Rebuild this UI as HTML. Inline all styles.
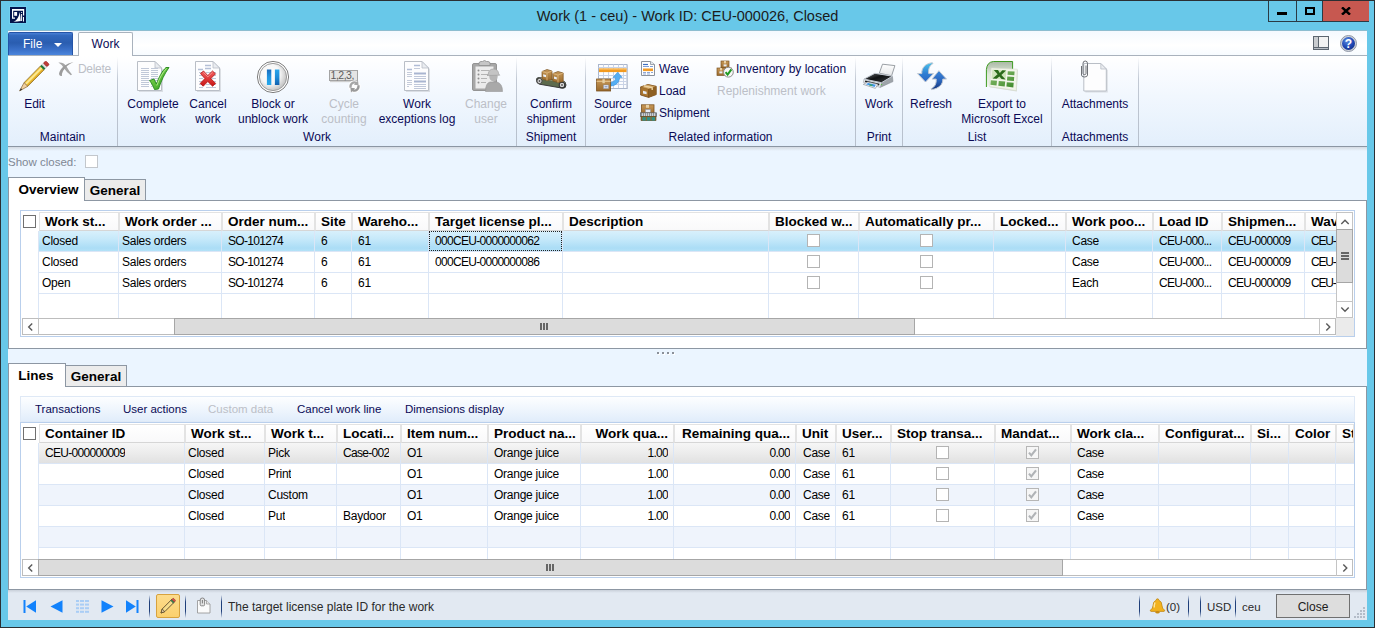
<!DOCTYPE html>
<html><head><meta charset="utf-8"><title>Work</title>
<style>
html,body{margin:0;padding:0;}
body{width:1375px;height:628px;overflow:hidden;background:#68c8e9;font-family:"Liberation Sans",sans-serif;font-size:12px;color:#0a0a56;}
#win{position:absolute;left:0;top:0;width:1375px;height:628px;background:#68c8e9;box-sizing:border-box;border:1px solid #2b2f33;overflow:hidden;}
#win *{box-sizing:border-box;}
.a{position:absolute;}
/* all coordinates inside #win are relative to its padding box => offset by -1 ; we use #o wrapper */
#o{position:absolute;left:-1px;top:-1px;width:1375px;height:628px;}
#title{left:0;width:1375px;top:6px;height:20px;line-height:20px;text-align:center;font-size:14.5px;color:#1b1b1b;}
#content{left:8px;top:30px;width:1359px;height:590px;background:#ebf5ff;}
.capbtn{top:1px;height:21px;border-left:1px solid #2a3a44;border-bottom:1px solid #2a3a44;}
#tabrow{left:8px;top:31px;width:1359px;height:25px;background:linear-gradient(#f4f9ff,#ffffff 60%,#f7fbff);border-bottom:1px solid #a9b2bd;}
#filebtn{left:8px;top:32px;width:65px;height:23px;border-radius:2px 2px 0 0;background:linear-gradient(#4a80d6,#3168bd 12%,#2a5db0 45%,#3a70c8 75%,#4c86dc);border:1px solid #2454a8;border-bottom:none;color:#fff;font-size:12px;line-height:21px;}
#worktab{left:78px;top:32px;width:55px;height:24px;border:1px solid #a9b2bd;border-bottom:none;border-radius:2px 2px 0 0;background:#fff;font-size:12px;line-height:22px;text-align:center;color:#0a0a56;}
#ribbon{left:8px;top:56px;width:1359px;height:91px;background:linear-gradient(#ffffff,#fafcff 15%,#f1f7fe 45%,#e3effc 100%);border-bottom:1px solid #8b96a3;}
.gsep{top:57px;width:1px;height:89px;background:linear-gradient(rgba(190,198,210,0),#c2c9d4 25%,#b6bfcc);}
.glabel{top:130px;height:15px;line-height:15px;text-align:center;white-space:nowrap;}
.lb{top:97px;line-height:15px;text-align:center;white-space:nowrap;}
.dis{color:#bcbfc7;}
.st{height:15px;line-height:15px;white-space:nowrap;}
.panel{background:#fff;border:1px solid #8d97a3;}
.tabA{letter-spacing:0;background:#fff;border:1px solid #8d97a3;border-bottom:none;font-weight:bold;font-size:13.5px;color:#000;text-align:center;}
.tabB{letter-spacing:0;background:#ececec;border:1px solid #8d97a3;font-weight:bold;font-size:13.5px;color:#000;text-align:center;}
.hdr{top:0;height:19px;border:1px solid #e3e3e3;border-bottom-color:#d6d6d6;background:linear-gradient(#ffffff,#f9f9fa);font-weight:bold;font-size:13.5px;line-height:17px;color:#000;padding-left:5px;white-space:nowrap;overflow:hidden;}
.cell{height:21px;line-height:20px;white-space:nowrap;overflow:hidden;color:#000;font-size:12px;letter-spacing:-0.25px;}
.vl{width:1px;background:#dbe6f6;}
.hl{height:1px;background:#dbe6f6;}
.cb{width:13px;height:13px;border:1px solid #a8a8a8;background:#fff;}
.sbar{background:#fff;border:1px solid #a6a6a6;}

.num{letter-spacing:-0.7px;}

</style></head>
<body>
<div id="win">
<!-- p_chrome -->
<div id="o">
<svg class="a" style="left:9px;top:6px" width="18" height="18" viewBox="-1 -1 18 18"><rect x="-1" y="-1" width="18" height="18" fill="#7ad6f2" opacity="0.55"/><rect width="16" height="16" fill="#03144c"/><path d="M2 2 H14.2 V8.6 H13 V3.7 H3.2 V10.6 H5 V11.8 H2 Z" fill="#fff"/><rect x="4.2" y="5" width="2.9" height="3.8" fill="#fff"/><path d="M3.3 14.7 C7 13.5 8.8 10 9.8 5 C10.3 8.5 10.6 11.5 10.8 14 C8.5 14.2 6 14.6 3.3 14.7Z" fill="#fff"/><rect x="11.1" y="7" width="1" height="7" fill="#fff"/><circle cx="11.6" cy="5.5" r="0.6" fill="#fff"/><rect x="13" y="10" width="1" height="4.5" fill="#fff"/></svg>
<div id="title" class="a">Work (1 - ceu) - Work ID: CEU-000026, Closed</div>
<div class="a capbtn" style="left:1268px;width:28px;"></div>
<div class="a" style="left:1277px;top:12px;width:10px;height:3px;background:#000"></div>
<div class="a capbtn" style="left:1296px;width:26px;"></div>
<div class="a" style="left:1305px;top:7px;width:10px;height:8px;border:2px solid #000;"></div>
<div class="a capbtn" style="left:1322px;width:47px;background:#c75850;border-left:1px solid #2a3a44;"></div>
<svg class="a" style="left:1341px;top:7px" width="10" height="8" viewBox="0 0 10 8"><path d="M1 0.4L9 7.6M9 0.4L1 7.6" stroke="#000" stroke-width="2.5" fill="none"/></svg>
<div id="content" class="a"></div>
<div class="a" style="left:8px;top:30px;width:1359px;height:1px;background:#8dbdd0"></div>
<div id="tabrow" class="a"></div>
<div id="filebtn" class="a"><span class="a" style="left:14px;top:1px">File</span><span class="a" style="left:45px;top:10px;width:0;height:0;border-left:4px solid transparent;border-right:4px solid transparent;border-top:4px solid #fff"></span></div>
<div id="worktab" class="a">Work</div>
<svg class="a" style="left:1313px;top:36px" width="16" height="14" viewBox="0 0 16 14"><rect x="0.5" y="0.5" width="15" height="13" fill="#f2f2f2" stroke="#5d6670"/><rect x="1" y="1" width="4" height="10" fill="#c9ccd0"/><rect x="1" y="11" width="14" height="2" fill="#b8bdc4"/><path d="M5.5 1V11M1 11.5H15" stroke="#5d6670" stroke-width="1" fill="none"/></svg>
<svg class="a" style="left:1340px;top:35px" width="17" height="17" viewBox="0 0 17 17"><defs><radialGradient id="hg" cx="0.4" cy="0.3" r="0.8"><stop offset="0" stop-color="#5b8de0"/><stop offset="0.6" stop-color="#1f46b4"/><stop offset="1" stop-color="#14307e"/></radialGradient></defs><circle cx="8.5" cy="8.5" r="8" fill="#d0d4dc" stroke="#8f97a6"/><circle cx="8.5" cy="8.5" r="6.5" fill="url(#hg)"/><text x="8.5" y="13" text-anchor="middle" font-family="Liberation Sans" font-weight="bold" font-size="12" fill="#fff">?</text></svg>
<div id="ribbon" class="a"></div>
<!-- p_ribbon -->
<svg width="0" height="0" style="position:absolute"><defs><linearGradient id="gGreen" x1="0" y1="0" x2="1" y2="1"><stop offset="0" stop-color="#8fe05a"/><stop offset="1" stop-color="#2c9a1c"/></linearGradient><linearGradient id="gRed" x1="0" y1="0" x2="0" y2="1"><stop offset="0" stop-color="#f46060"/><stop offset="1" stop-color="#c81414"/></linearGradient><linearGradient id="gBox" x1="0" y1="0" x2="0" y2="1"><stop offset="0" stop-color="#c99a5a"/><stop offset="1" stop-color="#9a6a2c"/></linearGradient><linearGradient id="gBlueA" x1="0" y1="0" x2="0" y2="1"><stop offset="0" stop-color="#6db3ee"/><stop offset="1" stop-color="#2a62b8"/></linearGradient><linearGradient id="gPause" x1="0" y1="0" x2="1" y2="0"><stop offset="0" stop-color="#1a86d8"/><stop offset="0.5" stop-color="#3fa6ec"/><stop offset="1" stop-color="#1668b4"/></linearGradient><radialGradient id="gDisc" cx="0.5" cy="0.5" r="0.5"><stop offset="0" stop-color="#ffffff"/><stop offset="0.7" stop-color="#f4f4f4"/><stop offset="1" stop-color="#c9c9c9"/></radialGradient><linearGradient id="gXl" x1="0" y1="0" x2="0" y2="1"><stop offset="0" stop-color="#dfeede"/><stop offset="1" stop-color="#9cc58e"/></linearGradient></defs></svg>
<div class="a gsep" style="left:117px"></div>
<div class="a gsep" style="left:516px"></div>
<div class="a gsep" style="left:585px"></div>
<div class="a gsep" style="left:855px"></div>
<div class="a gsep" style="left:902px"></div>
<div class="a gsep" style="left:1051px"></div>
<div class="a gsep" style="left:1138px"></div>
<div class="a glabel" style="left:-37.5px;width:200px">Maintain</div>
<div class="a glabel" style="left:217px;width:200px">Work</div>
<div class="a glabel" style="left:451px;width:200px">Shipment</div>
<div class="a glabel" style="left:620.5px;width:200px">Related information</div>
<div class="a glabel" style="left:779px;width:200px">Print</div>
<div class="a glabel" style="left:877px;width:200px">List</div>
<div class="a glabel" style="left:995px;width:200px">Attachments</div>
<div class="a lb" style="left:-45.5px;width:160px">Edit</div>
<div class="a lb" style="left:73px;width:160px">Complete<br>work</div>
<div class="a lb" style="left:128px;width:160px">Cancel<br>work</div>
<div class="a lb" style="left:193px;width:160px">Block or<br>unblock work</div>
<div class="a lb dis" style="left:264px;width:160px">Cycle<br>counting</div>
<div class="a lb" style="left:337px;width:160px">Work<br>exceptions log</div>
<div class="a lb dis" style="left:406px;width:160px">Change<br>user</div>
<div class="a lb" style="left:471px;width:160px">Confirm<br>shipment</div>
<div class="a lb" style="left:533px;width:160px">Source<br>order</div>
<div class="a lb" style="left:799px;width:160px">Work</div>
<div class="a lb" style="left:851px;width:160px">Refresh</div>
<div class="a lb" style="left:922px;width:160px">Export to<br>Microsoft Excel</div>
<div class="a lb" style="left:1015px;width:160px">Attachments</div>
<div class="a st dis" style="left:78px;top:62px;letter-spacing:-0.3px">Delete</div>
<div class="a st" style="left:659px;top:62px">Wave</div>
<div class="a st" style="left:659px;top:84px">Load</div>
<div class="a st" style="left:659px;top:106px">Shipment</div>
<div class="a st" style="left:736px;top:62px">Inventory by location</div>
<div class="a st dis" style="left:717px;top:84px">Replenishment work</div>
<svg class="a" style="left:19px;top:61px" width="31" height="31" viewBox="0 0 31 31"><g transform="translate(0.6,29.9) rotate(-45.4)"><rect x="9" y="-2.6" width="23.4" height="5.2" fill="#f3c93f" stroke="#8c6d2c" stroke-width="0.8"/><rect x="9" y="-1.3" width="23" height="1.7" fill="#fbe896"/><rect x="9" y="1.2" width="23" height="1" fill="#dba524"/><path d="M0 0 L9 -2.6 L9 2.6 Z" fill="#f0cfa0" stroke="#8a6a3a" stroke-width="0.7"/><path d="M0 0 L2.8 -0.9 L2.8 0.9 Z" fill="#2e2e2e"/><rect x="32" y="-2.6" width="2.2" height="5.2" fill="#1c7a3a"/><rect x="34.2" y="-2.6" width="2.2" height="5.2" fill="#e2e2e2" stroke="#9a9a9a" stroke-width="0.4"/><rect x="36.4" y="-2.6" width="3.4" height="5.2" rx="1.2" fill="#c03c39" stroke="#8e2c29" stroke-width="0.5"/></g></svg>
<svg class="a" style="left:58px;top:61px" width="17" height="16" viewBox="0 0 17 16"><path d="M0.4 1.6 Q6 1.2 8.7 5.8 Q11.2 10.5 14 13.6 L12.8 14.3 Q8.6 11.4 6.2 7.6 Q4 3.6 0.4 1.6Z" fill="#a6a6a6"/><path d="M15.6 0.9 Q8.4 4 5 10 Q3.6 12.8 4 14.8 Q1.6 15.6 1 13 Q1.4 9 6 5 Q10 1.6 15.6 0.9Z" fill="#9c9c9c"/></svg>
<svg class="a" style="left:137px;top:61px" width="33" height="31" viewBox="0 0 33 31"><path d="M2 2H19 L26 8 V31 H2Z" fill="#c4c8ce" opacity="0.55"/><path d="M0.5 0.5H18 L24.5 7 V29.5 H0.5Z" fill="#fdfdfe" stroke="#b9bec6"/><path d="M18 0.5V7H24.5 Z" fill="#e9ecf0" stroke="#b9bec6" stroke-width="0.8"/><path d="M4 7.5 H12 M14 7.5 H21" stroke="#c0c8d8" stroke-width="1"/><path d="M4 9.5 H12 M14 9.5 H21" stroke="#c0c8d8" stroke-width="1"/><path d="M4 11.5 H12 M14 11.5 H21" stroke="#c0c8d8" stroke-width="1"/><path d="M4 13.5 H12 M14 13.5 H21" stroke="#c0c8d8" stroke-width="1"/><path d="M4 15.5 H12 M14 15.5 H21" stroke="#c0c8d8" stroke-width="1"/><path d="M4 17.5 H12 M14 17.5 H21" stroke="#c0c8d8" stroke-width="1"/><path d="M4 19.5 H12 M14 19.5 H21" stroke="#c0c8d8" stroke-width="1"/><path d="M4 21.5 H12 M14 21.5 H21" stroke="#c0c8d8" stroke-width="1"/><path d="M4 23.5 H12 M14 23.5 H21" stroke="#c0c8d8" stroke-width="1"/><path d="M4 25.5 H12 M14 25.5 H21" stroke="#c0c8d8" stroke-width="1"/><path d="M12.5 19.5 L17 18 L19.5 23 C22 16 25 10 29 6.5 L32 6.5 C28 12 24 20 21.5 28 L17.5 28.5 C16 24.5 14.5 22 12.5 19.5 Z" fill="url(#gGreen)" stroke="#23861a" stroke-width="0.9"/><path d="M19.8 24.5 C22.5 17 25.5 11.5 29.5 7.5" stroke="#c8f5a0" stroke-width="1" fill="none" opacity="0.8"/></svg>
<svg class="a" style="left:195px;top:61px" width="27" height="31" viewBox="0 0 27 31"><path d="M2 2H19 L26 8 V31 H2Z" fill="#c4c8ce" opacity="0.55"/><path d="M0.5 0.5H18 L24.5 7 V29.5 H0.5Z" fill="#fdfdfe" stroke="#b9bec6"/><path d="M18 0.5V7H24.5 Z" fill="#e9ecf0" stroke="#b9bec6" stroke-width="0.8"/><path d="M10 4.5H16M10 7.5H16M3 8.5H8" stroke="#b4bfd6" stroke-width="1.4"/><path d="M4 11.5 H8 M11 11.5 H21" stroke="#c0c8d8" stroke-width="1"/><path d="M4 14.5 H8 M11 14.5 H21" stroke="#c0c8d8" stroke-width="1"/><path d="M4 17.5 H8 M11 17.5 H21" stroke="#c0c8d8" stroke-width="1"/><path d="M4 20.5 H8 M11 20.5 H21" stroke="#c0c8d8" stroke-width="1"/><path d="M4 23.5 H8 M11 23.5 H21" stroke="#c0c8d8" stroke-width="1"/><path d="M4 26.5 H8 M11 26.5 H21" stroke="#c0c8d8" stroke-width="1"/><path d="M5.5 12.5 L8.5 10 L12.8 14.6 L17.5 10 L20.5 12.8 L15.8 17.6 L20.6 22.4 L17.6 25.2 L12.8 20.5 L8.2 25.2 L5.2 22.4 L9.9 17.6 Z" fill="url(#gRed)" stroke="#b01010" stroke-width="0.8" stroke-linejoin="round"/><path d="M8.5 11.2 L12.8 15.8 L17.5 11.2" stroke="#ffb0b0" stroke-width="0.9" fill="none" opacity="0.8"/></svg>
<svg class="a" style="left:256px;top:60px" width="34" height="34" viewBox="0 0 34 34"><defs><linearGradient id="gP1" x1="0" y1="0" x2="0" y2="1"><stop offset="0" stop-color="#1c6cbc"/><stop offset="0.5" stop-color="#2196e2"/><stop offset="1" stop-color="#27a8ea"/></linearGradient><linearGradient id="gP2" x1="0" y1="0" x2="0" y2="1"><stop offset="0" stop-color="#2ba6ea"/><stop offset="0.5" stop-color="#1f8cd8"/><stop offset="1" stop-color="#1262b0"/></linearGradient><radialGradient id="gDisc2" cx="0.4" cy="0.4" r="0.65"><stop offset="0" stop-color="#ffffff"/><stop offset="0.55" stop-color="#f6f6f6"/><stop offset="1" stop-color="#bdbdbd"/></radialGradient></defs><circle cx="17" cy="17" r="15.6" fill="#ffffff" stroke="#7e7e7e" stroke-width="1"/><circle cx="17" cy="17" r="13.6" fill="url(#gDisc2)" stroke="#9c9c9c" stroke-width="1"/><rect x="10.9" y="9.5" width="4.4" height="15.5" fill="url(#gP1)"/><rect x="18.9" y="9.5" width="4.5" height="15.5" fill="url(#gP2)"/></svg>
<svg class="a" style="left:328px;top:69px" width="34" height="25" viewBox="0 0 34 25"><rect x="1.5" y="1.5" width="28" height="10" fill="#e4e4e4" stroke="#a4a4a4"/><rect x="2" y="12" width="28" height="1.2" fill="#cfcfcf"/><text x="2.6" y="10.4" font-family="Liberation Sans" font-size="10.5" fill="#5c5c5c" letter-spacing="-0.5">1,2,3,</text><circle cx="26.5" cy="17.5" r="6.2" fill="#fdfdfd"/><path d="M21.6 19 A5.2 5.2 0 0 1 28.8 12.8 L30 11.4 L30.6 16.2 L25.8 15.8 L27.2 14.6 A3 3 0 0 0 23.8 18.4 Z" fill="#a6a6a6"/><path d="M31.4 16 A5.2 5.2 0 0 1 24.2 22.2 L23 23.6 L22.4 18.8 L27.2 19.2 L25.8 20.4 A3 3 0 0 0 29.2 16.6 Z" fill="#9a9a9a"/></svg>
<svg class="a" style="left:404px;top:61px" width="27" height="31" viewBox="0 0 27 31"><path d="M2 2H19 L26 8 V31 H2Z" fill="#c4c8ce" opacity="0.55"/><path d="M0.5 0.5H18 L24.5 7 V29.5 H0.5Z" fill="#fdfdfe" stroke="#b9bec6"/><path d="M18 0.5V7H24.5 Z" fill="#e9ecf0" stroke="#b9bec6" stroke-width="0.8"/><path d="M10 4.5H16M3 8.5H8" stroke="#b0bcd6" stroke-width="1.6"/><path d="M10 7.5H16M3 11.5H8M3 13.5H8M3 15.5H8M3 19.5H8M3 21.5H8M3 23.5H8M3 25.5H5" stroke="#c4cbda" stroke-width="1"/><path d="M10 12.5H22M10 20.5H22" stroke="#a9b5d0" stroke-width="1.8"/><path d="M10 15.5H22M10 17.5H22M10 23.5H22M10 25.5H22M10 27.5H22" stroke="#c0c8da" stroke-width="1"/></svg>
<svg class="a" style="left:472px;top:60px" width="32" height="32" viewBox="0 0 32 32"><rect x="0.5" y="3.5" width="24" height="27" rx="1.5" fill="#a7a7a7" stroke="#949494"/><rect x="3.5" y="6.5" width="18" height="22" fill="#ececec"/><path d="M7 3.5 Q7 1.5 9 1.5 H10.5 Q12.5 -0.5 14.5 1.5 H16 Q18 1.5 18 3.5 V5.5 H7 Z" fill="#c6c6c6" stroke="#8f8f8f" stroke-width="0.8"/><path d="M9 10.5H17M9 14.5H17M9 18.5H15M9 22.5H14" stroke="#b4b4b4" stroke-width="1"/><circle cx="6.5" cy="10.5" r="1" fill="#8e8e8e"/><circle cx="6.5" cy="14.5" r="1" fill="#8e8e8e"/><circle cx="6.5" cy="18.5" r="1" fill="#8e8e8e"/><circle cx="6.5" cy="22.5" r="1" fill="#8e8e8e"/><path d="M13.5 31.5 Q13.5 23 18 22 L25 22 Q30.5 23.5 30.5 31.5 Z" fill="#a9a9a9" stroke="#979797" stroke-width="0.6"/><ellipse cx="21.5" cy="16.5" rx="4.2" ry="5" fill="#b6b6b6"/><path d="M16.2 14.5 Q16.5 9 21.5 9 Q26.3 9 26.7 14 L27.8 15.2 L15 15.5 Z" fill="#c4c4c4" stroke="#9b9b9b" stroke-width="0.6"/></svg>
<svg class="a" style="left:535px;top:68px" width="33" height="22" viewBox="0 0 33 22"><path d="M1.5 12.5 Q1 9.5 4 9.6 L27 12.6 Q31 13.4 31 17 Q31 20.5 27.5 20.2 L4.5 16.2 Q1.8 15.6 1.5 12.5Z" fill="#5d6b4d" stroke="#3d3d3d" stroke-width="1"/><path d="M4 10.4 L27 13.4 Q29.6 14 29.8 16" stroke="#9aa58a" stroke-width="1.2" fill="none"/><circle cx="4.5" cy="13" r="2.6" fill="#d8d8d8" stroke="#444" stroke-width="1"/><circle cx="4.5" cy="13" r="0.9" fill="#555"/><circle cx="27" cy="17" r="2.8" fill="#d8d8d8" stroke="#333" stroke-width="1.1"/><circle cx="27" cy="17" r="0.9" fill="#555"/><path d="M7 3.5 L12 1.5 L17 3 V11.5 L12 12.5 L7 11 Z" fill="url(#gBox)" stroke="#7a5220" stroke-width="0.7"/><path d="M7 3.5 L12 5 L17 3 M12 5 V12.5" stroke="#e2bd84" stroke-width="0.8" fill="none"/><rect x="8.2" y="6.5" width="2.8" height="2.2" fill="#e9eef5" transform="skewY(14) translate(0,-2.2)"/><path d="M17.8 5.5 L23 3.5 L28.2 5 V13.5 L23 14.5 L17.8 13 Z" fill="url(#gBox)" stroke="#7a5220" stroke-width="0.7"/><path d="M17.8 5.5 L23 7 L28.2 5 M23 7 V14.5" stroke="#e2bd84" stroke-width="0.8" fill="none"/><rect x="19" y="8.6" width="2.8" height="2.2" fill="#e9eef5" transform="skewY(14) translate(0,-4.8)"/></svg>
<svg class="a" style="left:596px;top:64px" width="33" height="28" viewBox="0 0 33 28"><g transform="translate(2,0)"><rect x="1" y="1" width="29" height="24" fill="#c7ccd3" opacity="0.7"/><rect x="0.5" y="0.5" width="28.5" height="24" fill="#fbfcfe" stroke="#aab6cc"/><path d="M5.5 0.5V24" stroke="#c9d3e6" stroke-width="1"/><path d="M10.5 0.5V24" stroke="#c9d3e6" stroke-width="1"/><path d="M15.5 0.5V24" stroke="#c9d3e6" stroke-width="1"/><path d="M20.5 0.5V24" stroke="#c9d3e6" stroke-width="1"/><path d="M25.5 0.5V24" stroke="#c9d3e6" stroke-width="1"/><path d="M0.5 3.5H29" stroke="#c9d3e6" stroke-width="1"/><path d="M0.5 11.5H29" stroke="#c9d3e6" stroke-width="1"/><path d="M0.5 14.5H29" stroke="#c9d3e6" stroke-width="1"/><path d="M0.5 17.5H29" stroke="#c9d3e6" stroke-width="1"/><path d="M0.5 20.5H29" stroke="#c9d3e6" stroke-width="1"/><rect x="1" y="4.5" width="27.5" height="3.6" fill="#f39a1f"/><rect x="1" y="4.5" width="27.5" height="1.2" fill="#f8bd62"/></g><path d="M15 18.4 C18.2 17.8 19.6 16 19.7 13.4 H17 L21.6 8.2 L26.2 13.4 H23.6 C23.4 18.2 20.2 21.4 15 22 Z" fill="#55aef2" stroke="#3a90dc" stroke-width="0.6"/><rect x="0.6" y="15" width="14" height="12" fill="url(#gBox)" stroke="#7a5220" stroke-width="0.8"/><path d="M0.6 17.4 H14.6" stroke="#e5c48e" stroke-width="1"/><rect x="6.4" y="15.2" width="2.4" height="4" fill="#e6cfa2"/><rect x="7.5" y="21" width="5" height="3.6" fill="#e8edf6" stroke="#8a93a6" stroke-width="0.5"/><path d="M8.5 22.8H11.5" stroke="#5a6a9a" stroke-width="0.8"/></svg>
<svg class="a" style="left:640px;top:61px" width="16" height="16" viewBox="0 0 16 16"><path d="M1.5 0.5H10.5L14.5 3.5V14.5H1.5Z" fill="#fff" stroke="#8b929c"/><path d="M10.5 0.5V3.5H14.5" fill="#e4e8ee" stroke="#8b929c" stroke-width="0.8"/><path d="M3 3.5H8" stroke="#3f6fc0" stroke-width="1.2"/><path d="M3 5.5H9M10 5.5H13" stroke="#7e9fd8" stroke-width="1"/><rect x="3" y="7.5" width="10" height="2.6" fill="#f29a25"/><path d="M3 11.5H6M7 11.5H10M11 11.5H13M3 13H6M7 13H10" stroke="#8ea6d4" stroke-width="1"/></svg>
<svg class="a" style="left:640px;top:84px" width="17" height="14" viewBox="0 0 17 14"><path d="M0.6 3 L8 0.6 L16.2 2.4 V10.6 L8.6 13.4 L0.6 11 Z" fill="#a9752f" stroke="#73491a" stroke-width="0.8"/><path d="M0.6 3 L8.6 5.2 L16.2 2.4 L8 0.6 Z" fill="#d7ac69" stroke="#8a5d24" stroke-width="0.6"/><path d="M8.6 5.2 V13.4" stroke="#6e4516" stroke-width="0.8"/><path d="M8.6 5.2 L16.2 2.4 V10.6 L8.6 13.4Z" fill="#8d5f22"/><path d="M4 1.8 L12.2 3.8 V6" stroke="#ecd2a2" stroke-width="1.4" fill="none"/><rect x="3" y="7" width="3.6" height="2.6" fill="#e7ecf4" transform="skewY(15) translate(0,-1)"/></svg>
<svg class="a" style="left:640px;top:104px" width="17" height="17" viewBox="0 0 17 17"><rect x="1.5" y="0.8" width="12.5" height="9" fill="url(#gBox)" stroke="#7a5220" stroke-width="0.8"/><rect x="6" y="0.8" width="3" height="3" fill="#e8d2a6"/><rect x="5.5" y="5.5" width="5" height="3" fill="#e8edf6" stroke="#8a93a6" stroke-width="0.5"/><rect x="0.5" y="8.8" width="16" height="3.6" fill="#8f9498" stroke="#5c6064" stroke-width="0.7"/><path d="M2.5 9.2V12M4.5 9.2V12M6.5 9.2V12M8.5 9.2V12M10.5 9.2V12M12.5 9.2V12M14.5 9.2V12" stroke="#d4d8dc" stroke-width="0.9"/><rect x="1" y="12.4" width="15" height="4.2" fill="#8a6a2e" stroke="#5e4518" stroke-width="0.6"/><rect x="2.4" y="13.2" width="3.4" height="3.4" fill="#2f8f86"/><rect x="7" y="13.2" width="3.4" height="3.4" fill="#2f8f86"/><rect x="11.6" y="13.2" width="3.4" height="3.4" fill="#2f8f86"/></svg>
<svg class="a" style="left:716px;top:60px" width="18" height="18" viewBox="0 0 18 18"><rect x="5" y="1" width="8" height="7" fill="url(#gBox)" stroke="#7a5220" stroke-width="0.7"/><rect x="8" y="1" width="2" height="2.4" fill="#ead2a4"/><rect x="7.6" y="4.4" width="3" height="2" fill="#e8edf6"/><rect x="1" y="8" width="8.4" height="7.4" fill="url(#gBox)" stroke="#7a5220" stroke-width="0.7"/><rect x="4" y="8" width="2" height="2.4" fill="#ead2a4"/><rect x="3.4" y="11.4" width="3" height="2" fill="#e8edf6"/><rect x="9.4" y="8" width="6" height="7.4" fill="#a8762f" stroke="#7a5220" stroke-width="0.7"/><circle cx="12.4" cy="12.2" r="4.9" fill="#f7f7f7" stroke="#8c8c8c" stroke-width="1"/><path d="M9.6 12.2 L11.6 14.6 L15.4 9.4" stroke="#1f9a22" stroke-width="2" fill="none"/></svg>
<svg class="a" style="left:862px;top:63px" width="34" height="27" viewBox="0 0 34 27"><defs><linearGradient id="gPrT" x1="0" y1="0" x2="1" y2="1"><stop offset="0" stop-color="#6a6e72"/><stop offset="0.45" stop-color="#101214"/><stop offset="1" stop-color="#3a3d40"/></linearGradient><linearGradient id="gPap" x1="0" y1="0" x2="0" y2="1"><stop offset="0" stop-color="#ffffff"/><stop offset="1" stop-color="#e4e6e8"/></linearGradient></defs><path d="M20.5 1.2 L32.9 2.6 L29.6 12.8 L17.3 10.2 Z" fill="url(#gPap)" stroke="#8f949a" stroke-width="0.9"/><path d="M30.4 13.2 L31 18.6 L18.2 24.4 L19.5 19.7 Z" fill="#9ea4aa" stroke="#7d838a" stroke-width="0.5"/><path d="M2 16.1 L19.5 19.7 L18.2 24.4 L1.4 19.4 Z" fill="#e8ebee" stroke="#8f959c" stroke-width="0.5"/><path d="M2 16.1 L12.9 10.3 L30.4 13.2 L19.5 19.7 Z" fill="url(#gPrT)" stroke="#c5ccd4" stroke-width="1"/><path d="M3.2 17.6 L17.6 20.8 L17 22.6 L2.9 19 Z" fill="#1c1e21"/><path d="M1.3 21.4 L5.8 18.9 L15.8 21.3 L13.4 25.4 Z" fill="#f8f9fa" stroke="#8f959c" stroke-width="0.7"/><path d="M3.8 21.3 L6.2 20 L13.8 21.8 L12.6 24 Z" fill="#3f93ea"/><path d="M7.6 21 L10.8 21.8 L10.2 23.2 L7.2 22.4 Z" fill="#3aa36a"/><circle cx="19.6" cy="21.6" r="0.7" fill="#55c040"/></svg>
<svg class="a" style="left:916px;top:61px" width="32" height="30" viewBox="0 0 32 30"><defs><linearGradient id="gRf1" x1="0" y1="0" x2="0" y2="1"><stop offset="0" stop-color="#4cc4ec"/><stop offset="0.55" stop-color="#2f7fd4"/><stop offset="1" stop-color="#2c66c2"/></linearGradient><linearGradient id="gRf2" x1="0" y1="0" x2="0" y2="1"><stop offset="0" stop-color="#3c86d8"/><stop offset="0.5" stop-color="#2c68c0"/><stop offset="1" stop-color="#14357c"/></linearGradient></defs><path d="M16.4 1.7 C9 2.5 5.5 7 5.8 12.6 L1.5 12.6 L9.5 21 L17.5 12.6 L12.7 12.6 C12.2 8 13.5 4.5 17 2.5 Z" fill="url(#gRf1)" stroke="#c3c9d2" stroke-width="1"/><path d="M15.6 28.6 C23 27.5 27 23.5 26.8 18.1 L30.5 18.1 L22.9 9.7 L16 18.1 L20.2 18.1 C20.5 22.5 19 26 15 27.8 Z" fill="url(#gRf2)" stroke="#c3c9d2" stroke-width="1"/></svg>
<svg class="a" style="left:985px;top:60px" width="34" height="32" viewBox="0 0 34 32"><defs><linearGradient id="gXb" x1="0" y1="0" x2="0" y2="1"><stop offset="0" stop-color="#a9b8a4"/><stop offset="0.5" stop-color="#dfe9da"/><stop offset="1" stop-color="#eef4ea"/></linearGradient><linearGradient id="gXc" x1="0" y1="0" x2="1" y2="1"><stop offset="0" stop-color="#8dc070"/><stop offset="1" stop-color="#3f8a2c"/></linearGradient></defs><path d="M1.4 27 V9.6 Q2 2 8.4 1.5 H27.6 V9" fill="url(#gXb)" stroke="#3d9b20" stroke-width="1"/><path d="M6.3 8 L32.3 9.2 L31.2 30.8 L4.3 26.6 Z" fill="#c9cdc2" opacity="0.7" transform="translate(0.6,0.7)"/><path d="M6.3 8 L32.3 9.2 L31.2 30.6 L4.3 26.5 Z" fill="#f2f5ea" stroke="#d9ddcf" stroke-width="0.6"/><path d="M7.4 9.6 L21.4 10.3 L20.6 19.8 L6.4 18.6 Z" fill="#cfe4bb"/><path d="M22.8 11.2 L29.6 11.6 L29.3 15.2 L22.5 14.7Z M22.3 16.5 L29.2 17 L28.9 21 L22 20.4Z M21.8 22.2 L28.7 22.8 L28.3 27.4 L21.4 26.5Z M5.9 20.2 L12 20.8 L11.5 25.6 L5.4 24.8Z M13.8 21 L20.2 21.6 L19.7 26.4 L13.3 25.7Z" fill="url(#gXc)"/><path d="M8.8 9.9 L13 10.1 L14.8 13 L17.4 10.3 L21 10.5 L16.4 14.9 L20.6 19.4 L16.6 19.1 L14.4 16.4 L11.6 18.8 L7.6 18.5 L12.6 14.3 Z" fill="#2a6a1a"/></svg>
<svg class="a" style="left:1079px;top:60px" width="30" height="33" viewBox="0 0 30 33"><g transform="translate(4.3,3)"><path d="M2 2H18.5 L24.5 7 V29.5 H2Z" fill="#c4c8ce" opacity="0.55"/><path d="M0.5 0.5H17.5 L23 6 V28 H0.5Z" fill="#fdfdfe" stroke="#b9bec6"/><path d="M17.5 0.5V6H23 Z" fill="#e9ecf0" stroke="#b9bec6" stroke-width="0.8"/></g><path d="M2.5 6 V15 Q2.5 17 5.5 17 Q8.5 17 8.5 15 V3.5 Q8.5 1 6.2 1 Q4 1 4 3.5 V13.5 Q4 14.6 5.5 14.6 Q7 14.6 7 13.5 V5.5" fill="none" stroke="#5c6066" stroke-width="0.9"/></svg>
<!-- p_grid1 -->
<div class="a" style="left:8px;top:147px;width:1359px;height:4px;background:linear-gradient(#d4dae2,#ebf5ff)"></div>
<div class="a st" style="left:8px;top:155px;color:#7f8894;font-size:11.5px">Show closed:</div>
<div class="a cb" style="left:85px;top:155px;border-color:#c3c7cc"></div>
<div class="a panel" style="left:8px;top:200px;width:1359px;height:149px;border-right-color:#8d97a3"></div>
<div class="a tabB" style="left:84px;top:179px;width:62px;height:22px;line-height:21px;">General</div>
<div class="a tabA" style="left:8px;top:177px;width:77px;height:24px;line-height:23px;padding-left:4px">Overview</div>
<div class="a" style="left:9px;top:200px;width:75px;height:2px;background:#fff"></div>
<div class="a" style="left:20px;top:210px;width:1335px;height:127px;border:1px solid #b9cfec;background:#fff"></div>
<div class="a cb" style="left:23px;top:215px;border-color:#707070"></div>
<div class="a" style="left:39px;top:231px;width:1297px;height:20px;background:linear-gradient(#d8f0fc,#c6e9fa 40%,#abddf6 85%,#b3e1f7)"></div>
<div class="a hl" style="left:39px;top:251px;width:1297px"></div>
<div class="a hl" style="left:39px;top:272px;width:1297px"></div>
<div class="a hl" style="left:39px;top:293px;width:1297px"></div>
<div class="a vl" style="left:38px;top:231px;height:87px"></div>
<div class="a vl" style="left:118px;top:231px;height:87px"></div>
<div class="a vl" style="left:221px;top:231px;height:87px"></div>
<div class="a vl" style="left:314px;top:231px;height:87px"></div>
<div class="a vl" style="left:351px;top:231px;height:87px"></div>
<div class="a vl" style="left:428px;top:231px;height:87px"></div>
<div class="a vl" style="left:562px;top:231px;height:87px"></div>
<div class="a vl" style="left:768px;top:231px;height:87px"></div>
<div class="a vl" style="left:858px;top:231px;height:87px"></div>
<div class="a vl" style="left:993px;top:231px;height:87px"></div>
<div class="a vl" style="left:1065px;top:231px;height:87px"></div>
<div class="a vl" style="left:1152px;top:231px;height:87px"></div>
<div class="a vl" style="left:1221px;top:231px;height:87px"></div>
<div class="a vl" style="left:1304px;top:231px;height:87px"></div>
<div class="a hdr" style="left:39px;top:212px;width:80px;">Work st...</div>
<div class="a hdr" style="left:119px;top:212px;width:103px;">Work order ...</div>
<div class="a hdr" style="left:222px;top:212px;width:93px;">Order num...</div>
<div class="a hdr" style="left:315px;top:212px;width:37px;">Site</div>
<div class="a hdr" style="left:352px;top:212px;width:77px;">Wareho...</div>
<div class="a hdr" style="left:429px;top:212px;width:134px;">Target license pl...</div>
<div class="a hdr" style="left:563px;top:212px;width:206px;">Description</div>
<div class="a hdr" style="left:769px;top:212px;width:90px;">Blocked w...</div>
<div class="a hdr" style="left:859px;top:212px;width:135px;">Automatically pr...</div>
<div class="a hdr" style="left:994px;top:212px;width:72px;">Locked...</div>
<div class="a hdr" style="left:1066px;top:212px;width:87px;">Work poo...</div>
<div class="a hdr" style="left:1153px;top:212px;width:69px;">Load ID</div>
<div class="a hdr" style="left:1222px;top:212px;width:83px;">Shipmen...</div>
<div class="a hdr" style="left:1305px;top:212px;width:32px;">Wav</div>
<div class="a cell" style="left:42px;top:231px;width:75px">Closed</div>
<div class="a cell" style="left:122px;top:231px;width:98px">Sales orders</div>
<div class="a cell num" style="left:228px;top:231px;width:85px">SO-101274</div>
<div class="a cell" style="left:321px;top:231px;width:30px">6</div>
<div class="a cell" style="left:358px;top:231px;width:69px">61</div>
<div class="a cell num" style="left:435px;top:231px;width:126px">000CEU-0000000062</div>
<div class="a cell" style="left:1072px;top:231px;width:80px">Case</div>
<div class="a cell num" style="left:1159px;top:231px;width:62px">CEU-000...</div>
<div class="a cell num" style="left:1228px;top:231px;width:76px">CEU-000009</div>
<div class="a cell" style="left:1311px;top:231px;width:32px;letter-spacing:-1.2px">CEU-</div>
<div class="a cb" style="left:807px;top:234px;border-color:#b4b4b4"></div>
<div class="a cb" style="left:920px;top:234px;border-color:#b4b4b4"></div>
<div class="a cell" style="left:42px;top:252px;width:75px">Closed</div>
<div class="a cell" style="left:122px;top:252px;width:98px">Sales orders</div>
<div class="a cell num" style="left:228px;top:252px;width:85px">SO-101274</div>
<div class="a cell" style="left:321px;top:252px;width:30px">6</div>
<div class="a cell" style="left:358px;top:252px;width:69px">61</div>
<div class="a cell num" style="left:435px;top:252px;width:126px">000CEU-0000000086</div>
<div class="a cell" style="left:1072px;top:252px;width:80px">Case</div>
<div class="a cell num" style="left:1159px;top:252px;width:62px">CEU-000...</div>
<div class="a cell num" style="left:1228px;top:252px;width:76px">CEU-000009</div>
<div class="a cell" style="left:1311px;top:252px;width:32px;letter-spacing:-1.2px">CEU-</div>
<div class="a cb" style="left:807px;top:255px;border-color:#b4b4b4"></div>
<div class="a cb" style="left:920px;top:255px;border-color:#b4b4b4"></div>
<div class="a cell" style="left:42px;top:273px;width:75px">Open</div>
<div class="a cell" style="left:122px;top:273px;width:98px">Sales orders</div>
<div class="a cell num" style="left:228px;top:273px;width:85px">SO-101274</div>
<div class="a cell" style="left:321px;top:273px;width:30px">6</div>
<div class="a cell" style="left:358px;top:273px;width:69px">61</div>
<div class="a cell" style="left:1072px;top:273px;width:80px">Each</div>
<div class="a cell num" style="left:1159px;top:273px;width:62px">CEU-000...</div>
<div class="a cell num" style="left:1228px;top:273px;width:76px">CEU-000009</div>
<div class="a cell" style="left:1311px;top:273px;width:32px;letter-spacing:-1.2px">CEU-</div>
<div class="a cb" style="left:807px;top:276px;border-color:#b4b4b4"></div>
<div class="a cb" style="left:920px;top:276px;border-color:#b4b4b4"></div>
<div class="a" style="left:429px;top:231px;width:133px;height:20px;border:1px dotted #222"></div>
<div class="a" style="left:1336px;top:212px;width:17px;height:106px;background:#fff;border:1px solid #c4c4c4"></div>
<div class="a" style="left:1336px;top:229px;width:17px;height:54px;background:#dcdcdc;border:1px solid #a6a6a6"></div>
<div class="a" style="left:1341px;top:252px;width:8px;height:8px;background:linear-gradient(#666 2px,transparent 2px,transparent 3px,#666 3px,#666 5px,transparent 5px,transparent 6px,#666 6px)"></div>
<svg class="a" style="left:1336.5px;top:213.5px" width="16" height="16" viewBox="0 0 16 16"><path d="M4.3 10 L8 6.3 L11.7 10" fill="none" stroke="#5a5a5a" stroke-width="1.4"/></svg>
<svg class="a" style="left:1336.5px;top:301px" width="16" height="16" viewBox="0 0 16 16"><path d="M4.3 6.5 L8 10.2 L11.7 6.5" fill="none" stroke="#5a5a5a" stroke-width="1.4"/></svg>
<div class="a" style="left:1336px;top:301px;width:17px;height:1px;background:#c4c4c4"></div>
<div class="a" style="left:22px;top:318px;width:1314px;height:17px;background:#fff;border:1px solid #bdbdbd"></div>
<div class="a" style="left:38px;top:318px;width:1px;height:17px;background:#c4c4c4"></div>
<div class="a" style="left:1319px;top:318px;width:1px;height:17px;background:#c4c4c4"></div>
<div class="a" style="left:174px;top:318px;width:741px;height:17px;background:#dcdcdc;border:1px solid #a6a6a6"></div>
<div class="a" style="left:540px;top:323px;width:8px;height:7px;background:linear-gradient(90deg,#666 2px,transparent 2px,transparent 3px,#666 3px,#666 5px,transparent 5px,transparent 6px,#666 6px)"></div>
<svg class="a" style="left:22px;top:318.5px" width="16" height="16" viewBox="0 0 16 16"><path d="M10.2 4.5 L6.7 8 L10.2 11.5" fill="none" stroke="#5a5a5a" stroke-width="1.4"/></svg>
<svg class="a" style="left:1320px;top:318.5px" width="16" height="16" viewBox="0 0 16 16"><path d="M6.3 4.5 L9.8 8 L6.3 11.5" fill="none" stroke="#5a5a5a" stroke-width="1.4"/></svg>
<div class="a" style="left:1336px;top:318px;width:18px;height:18px;background:#ebebeb"></div>
<div class="a" style="left:658px;top:353px;width:2px;height:2px;background:#fff"></div>
<div class="a" style="left:657px;top:352px;width:2px;height:2px;background:#8a9099"></div>
<div class="a" style="left:663px;top:353px;width:2px;height:2px;background:#fff"></div>
<div class="a" style="left:662px;top:352px;width:2px;height:2px;background:#8a9099"></div>
<div class="a" style="left:668px;top:353px;width:2px;height:2px;background:#fff"></div>
<div class="a" style="left:667px;top:352px;width:2px;height:2px;background:#8a9099"></div>
<div class="a" style="left:673px;top:353px;width:2px;height:2px;background:#fff"></div>
<div class="a" style="left:672px;top:352px;width:2px;height:2px;background:#8a9099"></div>
<!-- p_grid2 -->
<div class="a panel" style="left:8px;top:386px;width:1359px;height:204px;"></div>
<div class="a tabB" style="left:65px;top:365px;width:62px;height:22px;line-height:22px;">General</div>
<div class="a tabA" style="left:8px;top:363px;width:58px;height:24px;line-height:23px;padding-right:2px">Lines</div>
<div class="a" style="left:9px;top:386px;width:56px;height:2px;background:#fff"></div>
<div class="a" style="left:20px;top:396px;width:1335px;height:26px;border:1px solid #dfe9f6;background:linear-gradient(#fdfeff,#eef5fd 55%,#e1edfb)"></div>
<div class="a st" style="left:35px;top:402px;font-size:11.5px">Transactions</div>
<div class="a st" style="left:123px;top:402px;font-size:11.5px">User actions</div>
<div class="a st dis" style="left:208px;top:402px;font-size:11.5px">Custom data</div>
<div class="a st" style="left:297px;top:402px;font-size:11.5px">Cancel work line</div>
<div class="a st" style="left:405px;top:402px;font-size:11.5px">Dimensions display</div>
<div class="a" style="left:20px;top:422px;width:1335px;height:156px;border:1px solid #b9cfec;background:#fff"></div>
<div class="a cb" style="left:23px;top:427px;border-color:#707070"></div>
<div class="a" style="left:39px;top:443px;width:1315px;height:20px;background:linear-gradient(#f6f6f6,#ececec 50%,#e1e1e1)"></div>
<div class="a" style="left:39px;top:485px;width:1315px;height:20px;background:#eff4fc"></div>
<div class="a" style="left:39px;top:527px;width:1315px;height:20px;background:#eff4fc"></div>
<div class="a hl" style="left:39px;top:463px;width:1315px"></div>
<div class="a hl" style="left:39px;top:484px;width:1315px"></div>
<div class="a hl" style="left:39px;top:505px;width:1315px"></div>
<div class="a hl" style="left:39px;top:526px;width:1315px"></div>
<div class="a hl" style="left:39px;top:547px;width:1315px"></div>
<div class="a vl" style="left:38px;top:443px;height:116px"></div>
<div class="a vl" style="left:184px;top:443px;height:116px"></div>
<div class="a vl" style="left:264px;top:443px;height:116px"></div>
<div class="a vl" style="left:336px;top:443px;height:116px"></div>
<div class="a vl" style="left:400px;top:443px;height:116px"></div>
<div class="a vl" style="left:487px;top:443px;height:116px"></div>
<div class="a vl" style="left:580px;top:443px;height:116px"></div>
<div class="a vl" style="left:673px;top:443px;height:116px"></div>
<div class="a vl" style="left:795px;top:443px;height:116px"></div>
<div class="a vl" style="left:835px;top:443px;height:116px"></div>
<div class="a vl" style="left:890px;top:443px;height:116px"></div>
<div class="a vl" style="left:994px;top:443px;height:116px"></div>
<div class="a vl" style="left:1070px;top:443px;height:116px"></div>
<div class="a vl" style="left:1158px;top:443px;height:116px"></div>
<div class="a vl" style="left:1250px;top:443px;height:116px"></div>
<div class="a vl" style="left:1288px;top:443px;height:116px"></div>
<div class="a vl" style="left:1335px;top:443px;height:116px"></div>
<div class="a hdr" style="left:39px;top:424px;width:146px;">Container ID</div>
<div class="a hdr" style="left:185px;top:424px;width:80px;">Work st...</div>
<div class="a hdr" style="left:265px;top:424px;width:72px;">Work t...</div>
<div class="a hdr" style="left:337px;top:424px;width:64px;">Locati...</div>
<div class="a hdr" style="left:401px;top:424px;width:87px;">Item num...</div>
<div class="a hdr" style="left:488px;top:424px;width:93px;">Product na...</div>
<div class="a hdr" style="left:581px;top:424px;width:93px;text-align:right;padding-left:0;padding-right:5px;">Work qua...</div>
<div class="a hdr" style="left:674px;top:424px;width:122px;text-align:right;padding-left:0;padding-right:5px;">Remaining qua...</div>
<div class="a hdr" style="left:796px;top:424px;width:40px;">Unit</div>
<div class="a hdr" style="left:836px;top:424px;width:55px;">User...</div>
<div class="a hdr" style="left:891px;top:424px;width:104px;">Stop transa...</div>
<div class="a hdr" style="left:995px;top:424px;width:76px;">Mandat...</div>
<div class="a hdr" style="left:1071px;top:424px;width:88px;">Work cla...</div>
<div class="a hdr" style="left:1159px;top:424px;width:92px;">Configurat...</div>
<div class="a hdr" style="left:1251px;top:424px;width:38px;">Si...</div>
<div class="a hdr" style="left:1289px;top:424px;width:47px;">Color</div>
<div class="a hdr" style="left:1336px;top:424px;width:18px;">St</div>
<div class="a cell num" style="left:45px;top:443px">CEU-000000009</div>
<div class="a cell" style="left:188px;top:443px">Closed</div>
<div class="a cell" style="left:268px;top:443px">Pick</div>
<div class="a cell num" style="left:343px;top:443px">Case-002</div>
<div class="a cell" style="left:407px;top:443px">O1</div>
<div class="a cell" style="left:494px;top:443px">Orange juice</div>
<div class="a cell num" style="left:582px;top:443px;width:86px;text-align:right">1.00</div>
<div class="a cell num" style="left:675px;top:443px;width:115px;text-align:right">0.00</div>
<div class="a cell" style="left:803px;top:443px">Case</div>
<div class="a cell" style="left:842px;top:443px">61</div>
<div class="a cell" style="left:1077px;top:443px">Case</div>
<div class="a cb" style="left:936px;top:446px;border-color:#b4b4b4"></div>
<div class="a cb" style="left:1026px;top:446px;border-color:#b6b6b6;background:#f6f6f6"></div>
<svg class="a" style="left:1026px;top:446px" width="13" height="13" viewBox="0 0 13 13"><path d="M3 6.6 L5.3 9.4 L10 3.3" stroke="#b0b3b6" stroke-width="2.1" fill="none"/></svg>
<div class="a cell" style="left:188px;top:464px">Closed</div>
<div class="a cell" style="left:268px;top:464px">Print</div>
<div class="a cell" style="left:407px;top:464px">O1</div>
<div class="a cell" style="left:494px;top:464px">Orange juice</div>
<div class="a cell num" style="left:582px;top:464px;width:86px;text-align:right">1.00</div>
<div class="a cell num" style="left:675px;top:464px;width:115px;text-align:right">0.00</div>
<div class="a cell" style="left:803px;top:464px">Case</div>
<div class="a cell" style="left:842px;top:464px">61</div>
<div class="a cell" style="left:1077px;top:464px">Case</div>
<div class="a cb" style="left:936px;top:467px;border-color:#b4b4b4"></div>
<div class="a cb" style="left:1026px;top:467px;border-color:#b6b6b6;background:#f6f6f6"></div>
<svg class="a" style="left:1026px;top:467px" width="13" height="13" viewBox="0 0 13 13"><path d="M3 6.6 L5.3 9.4 L10 3.3" stroke="#b0b3b6" stroke-width="2.1" fill="none"/></svg>
<div class="a cell" style="left:188px;top:485px">Closed</div>
<div class="a cell" style="left:268px;top:485px">Custom</div>
<div class="a cell" style="left:407px;top:485px">O1</div>
<div class="a cell" style="left:494px;top:485px">Orange juice</div>
<div class="a cell num" style="left:582px;top:485px;width:86px;text-align:right">1.00</div>
<div class="a cell num" style="left:675px;top:485px;width:115px;text-align:right">0.00</div>
<div class="a cell" style="left:803px;top:485px">Case</div>
<div class="a cell" style="left:842px;top:485px">61</div>
<div class="a cell" style="left:1077px;top:485px">Case</div>
<div class="a cb" style="left:936px;top:488px;border-color:#b4b4b4"></div>
<div class="a cb" style="left:1026px;top:488px;border-color:#b6b6b6;background:#f6f6f6"></div>
<svg class="a" style="left:1026px;top:488px" width="13" height="13" viewBox="0 0 13 13"><path d="M3 6.6 L5.3 9.4 L10 3.3" stroke="#b0b3b6" stroke-width="2.1" fill="none"/></svg>
<div class="a cell" style="left:188px;top:506px">Closed</div>
<div class="a cell" style="left:268px;top:506px">Put</div>
<div class="a cell" style="left:343px;top:506px">Baydoor</div>
<div class="a cell" style="left:407px;top:506px">O1</div>
<div class="a cell" style="left:494px;top:506px">Orange juice</div>
<div class="a cell num" style="left:582px;top:506px;width:86px;text-align:right">1.00</div>
<div class="a cell num" style="left:675px;top:506px;width:115px;text-align:right">0.00</div>
<div class="a cell" style="left:803px;top:506px">Case</div>
<div class="a cell" style="left:842px;top:506px">61</div>
<div class="a cell" style="left:1077px;top:506px">Case</div>
<div class="a cb" style="left:936px;top:509px;border-color:#b4b4b4"></div>
<div class="a cb" style="left:1026px;top:509px;border-color:#b6b6b6;background:#f6f6f6"></div>
<svg class="a" style="left:1026px;top:509px" width="13" height="13" viewBox="0 0 13 13"><path d="M3 6.6 L5.3 9.4 L10 3.3" stroke="#b0b3b6" stroke-width="2.1" fill="none"/></svg>
<div class="a" style="left:22px;top:559px;width:1331px;height:17px;background:#fff;border:1px solid #bdbdbd"></div>
<div class="a" style="left:38px;top:559px;width:1px;height:17px;background:#c4c4c4"></div>
<div class="a" style="left:1336px;top:559px;width:1px;height:17px;background:#c4c4c4"></div>
<div class="a" style="left:38px;top:559px;width:1025px;height:17px;background:#dcdcdc;border:1px solid #a6a6a6"></div>
<div class="a" style="left:546px;top:564px;width:8px;height:7px;background:linear-gradient(90deg,#666 2px,transparent 2px,transparent 3px,#666 3px,#666 5px,transparent 5px,transparent 6px,#666 6px)"></div>
<svg class="a" style="left:22px;top:559.5px" width="16" height="16" viewBox="0 0 16 16"><path d="M10.2 4.5 L6.7 8 L10.2 11.5" fill="none" stroke="#5a5a5a" stroke-width="1.4"/></svg>
<svg class="a" style="left:1337px;top:559.5px" width="16" height="16" viewBox="0 0 16 16"><path d="M6.3 4.5 L9.8 8 L6.3 11.5" fill="none" stroke="#5a5a5a" stroke-width="1.4"/></svg>
<!-- p_status -->
<div class="a" style="left:8px;top:590px;width:1359px;height:30px;background:linear-gradient(#c9d0da,#e2e9f2 3px,#e2e9f2)"></div>
<svg class="a" style="left:23px;top:600px" width="14" height="13" viewBox="0 0 14 13"><rect x="0.5" y="0" width="2" height="13" fill="#1282fc"/><path d="M13 0.3V12.7L3.2 6.5Z" fill="#1282fc"/></svg>
<svg class="a" style="left:50px;top:600px" width="13" height="13" viewBox="0 0 13 13"><path d="M12.5 0.3V12.7L0.5 6.5Z" fill="#1282fc"/></svg>
<svg class="a" style="left:76px;top:600px" width="13" height="13" viewBox="0 0 13 13"><g fill="#a9cdf5"><rect x="0" y="0" width="3" height="2"/><rect x="4" y="0" width="4" height="2"/><rect x="9" y="0" width="4" height="2"/><rect x="0" y="3.6" width="3" height="2"/><rect x="4" y="3.6" width="4" height="2"/><rect x="9" y="3.6" width="4" height="2"/><rect x="0" y="7.2" width="3" height="2"/><rect x="4" y="7.2" width="4" height="2"/><rect x="9" y="7.2" width="4" height="2"/><rect x="0" y="10.8" width="3" height="2"/><rect x="4" y="10.8" width="4" height="2"/><rect x="9" y="10.8" width="4" height="2"/></g></svg>
<svg class="a" style="left:101px;top:600px" width="13" height="13" viewBox="0 0 13 13"><path d="M0.5 0.3V12.7L12.5 6.5Z" fill="#1282fc"/></svg>
<svg class="a" style="left:125px;top:600px" width="14" height="13" viewBox="0 0 14 13"><rect x="11.5" y="0" width="2" height="13" fill="#1282fc"/><path d="M1 0.3V12.7L10.8 6.5Z" fill="#1282fc"/></svg>
<div class="a" style="left:149px;top:595px;width:1px;height:23px;background:linear-gradient(rgba(30,60,120,0),#1f3f7a 30%,#1f3f7a 70%,rgba(30,60,120,0))"></div>
<div class="a" style="left:185px;top:595px;width:1px;height:23px;background:linear-gradient(rgba(30,60,120,0),#1f3f7a 30%,#1f3f7a 70%,rgba(30,60,120,0))"></div>
<div class="a" style="left:221px;top:595px;width:1px;height:23px;background:linear-gradient(rgba(30,60,120,0),#1f3f7a 30%,#1f3f7a 70%,rgba(30,60,120,0))"></div>
<div class="a" style="left:156px;top:594px;width:24px;height:24px;border:1px solid #d7a23e;border-radius:2px;background:linear-gradient(#fddc8c,#fbd06e)"></div>
<svg class="a" style="left:159px;top:597px" width="18" height="18" viewBox="0 0 18 18"><path d="M2 16 L3.2 12 L12.8 2.4 L15.4 5 L5.8 14.6 Z" fill="#f6dc8a" stroke="#5b4a2a" stroke-width="0.9"/><path d="M2 16 L3.2 12 L5.8 14.6Z" fill="#e8cfa8" stroke="#5b4a2a" stroke-width="0.8"/><path d="M11.6 3.6 L12.8 2.4 L15.4 5 L14.2 6.2Z" fill="#2f8a4a" stroke="#555" stroke-width="0.5"/><path d="M12.8 2.4 L13.7 1.5 Q14.2 1.1 14.8 1.6 L16.2 3 Q16.7 3.6 16.3 4.1 L15.4 5Z" fill="#d9534a" stroke="#7d2d28" stroke-width="0.5"/></svg>
<svg class="a" style="left:196px;top:597px" width="16" height="17" viewBox="0 0 16 17"><path d="M1.5 3.5 H10.5 L14 7 V16 H1.5 Z" fill="#fbfbfb" stroke="#9a9a9a" stroke-width="0.9"/><path d="M10.5 3.5 V7 H14" fill="#e6e6e6" stroke="#9a9a9a" stroke-width="0.8"/><path d="M4.2 7.5 V3 Q4.2 1 6.4 1 Q8.6 1 8.6 3 V7.6 Q8.6 8.8 7.5 8.8 H5.3 Q4.2 8.8 4.2 7.5Z" fill="#e4e4e4" stroke="#7c7c7c" stroke-width="0.9"/><path d="M6.4 3 V6.4" stroke="#7c7c7c" stroke-width="1"/></svg>
<div class="a st" style="left:228px;top:600px;color:#2a2a2a">The target license plate ID for the work</div>
<div class="a" style="left:1139px;top:595px;width:1px;height:23px;background:linear-gradient(rgba(30,60,120,0),#1f3f7a 30%,#1f3f7a 70%,rgba(30,60,120,0))"></div>
<div class="a" style="left:1188px;top:595px;width:1px;height:23px;background:linear-gradient(rgba(30,60,120,0),#1f3f7a 30%,#1f3f7a 70%,rgba(30,60,120,0))"></div>
<div class="a" style="left:1200px;top:595px;width:1px;height:23px;background:linear-gradient(rgba(30,60,120,0),#1f3f7a 30%,#1f3f7a 70%,rgba(30,60,120,0))"></div>
<div class="a" style="left:1235px;top:595px;width:1px;height:23px;background:linear-gradient(rgba(30,60,120,0),#1f3f7a 30%,#1f3f7a 70%,rgba(30,60,120,0))"></div>
<svg class="a" style="left:1149px;top:598px" width="17" height="16" viewBox="0 0 17 16"><path d="M8.5 0.8 Q9.8 0.8 9.8 2.2 Q13 3.4 13 7.5 Q13 10.5 15.6 12.2 Q16 13.2 15 13.4 H2 Q1 13.2 1.4 12.2 Q4 10.5 4 7.5 Q4 3.4 7.2 2.2 Q7.2 0.8 8.5 0.8Z" fill="#f2b21e" stroke="#b97f0c" stroke-width="0.7"/><path d="M6 4.4 Q5.2 6.4 5.2 9.4" stroke="#fde7a0" stroke-width="1.4" fill="none"/><ellipse cx="8.5" cy="14.3" rx="2" ry="1.3" fill="#c98a10"/></svg>
<div class="a st" style="left:1166px;top:600px;color:#2a2a2a;font-size:11.5px">(0)</div>
<div class="a st" style="left:1207px;top:600px;color:#2a2a2a;font-size:11.5px">USD</div>
<div class="a st" style="left:1242px;top:600px;color:#2a2a2a;font-size:11.5px">ceu</div>
<div class="a" style="left:1276px;top:594px;width:74px;height:24px;border:1px solid #707070;background:#dddddd;text-align:center;line-height:24px;color:#1a1a1a;font-size:12px">Close</div>
<svg class="a" style="left:1354px;top:607px" width="11" height="11" viewBox="0 0 11 11"><rect x="9" y="0" width="2" height="2" fill="#b4bcc8"/><rect x="6" y="3" width="2" height="2" fill="#b4bcc8"/><rect x="9" y="3" width="2" height="2" fill="#b4bcc8"/><rect x="3" y="6" width="2" height="2" fill="#b4bcc8"/><rect x="6" y="6" width="2" height="2" fill="#b4bcc8"/><rect x="9" y="6" width="2" height="2" fill="#b4bcc8"/><rect x="0" y="9" width="2" height="2" fill="#b4bcc8"/><rect x="3" y="9" width="2" height="2" fill="#b4bcc8"/><rect x="6" y="9" width="2" height="2" fill="#b4bcc8"/><rect x="9" y="9" width="2" height="2" fill="#b4bcc8"/></svg>
</div>
</body></html>
